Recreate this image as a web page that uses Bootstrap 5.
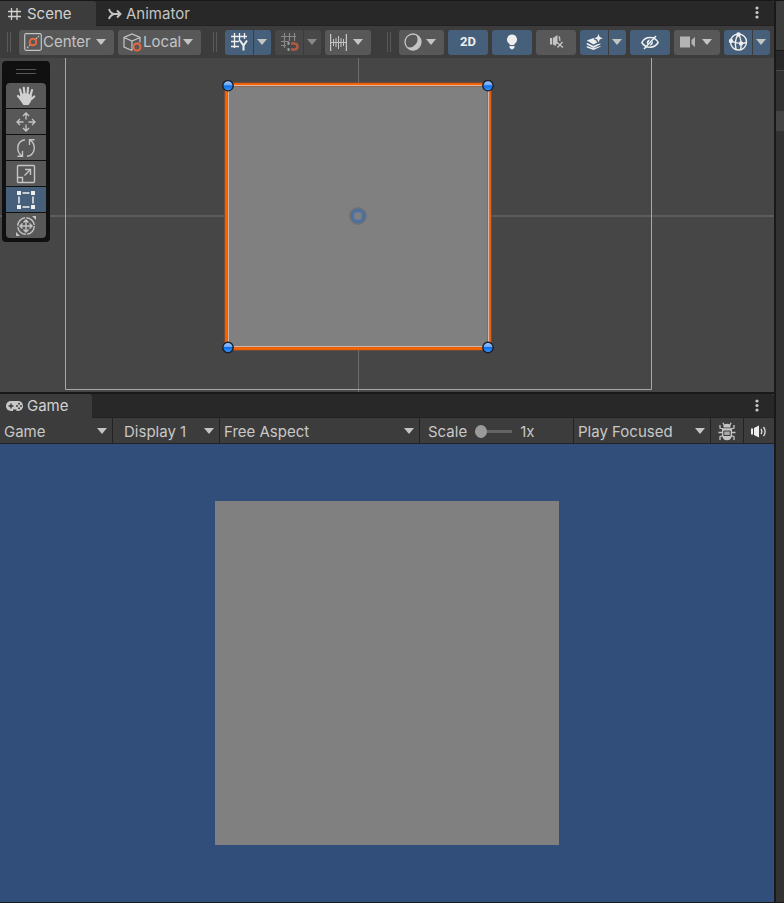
<!DOCTYPE html>
<html lang="en">
<head>
<meta charset="utf-8">
<meta name="viewport" content="width=device-width, initial-scale=1">
<title>Scene and Game views</title>
<link rel="stylesheet" href="https://cdn.jsdelivr.net/npm/bootstrap@5.3.0/dist/css/bootstrap.min.css">
<style>
  body { background: #191919; color: #c8c8c8; font-family: Inter, "Liberation Sans", sans-serif; font-size: 15px; line-height: 20px; }
  .editor { border-top: 1px solid #191919; border-bottom: 1px solid #191919; }
  .views { min-width: 0; gap: 2px; }
  .scene-view { flex: 391 1 0; background: #3c3c3c; min-height: 0; }
  .game-view { flex: 508 1 0; background: #3c3c3c; min-height: 0; }
  .tab-strip { height: 25px; background: #282828; border-bottom: 1px solid #222; flex: none; border-top-right-radius: 3px; }
  .game-view .tab-strip { height: 24px; }
  .dock-tab { margin-bottom: -1px; padding: 0 0 0 7px; gap: 5px; border: 0; background: transparent; color: #c4c4c4; text-align: left; }
  .dock-tab.active { background: #3c3c3c; color: #d2d2d2; border-top-right-radius: 3px; }
  .tab-scene { width: 96px; }
  .tab-animator { width: 110px; padding-left: 12px; gap: 4px; }
  .tab-game { width: 92px; padding-left: 6px; gap: 4px; }
  .kebab { width: 34px; border: 0; background: transparent; color: #c8c8c8; padding: 0 0 2px; }
  .scene-tools { height: 32px; padding: 0 4px 0 7px; gap: 8px; flex: none; }
  .tool-set { gap: 4px; }
  .grip { width: 4px; height: 20px; border: solid #595959; border-width: 0 1px; flex: none; }
  .tool-set + .grip { margin-left: 4px; }
  .tool { height: 25px; border: 0; border-radius: 3px; background: #585858; color: #c4c4c4; padding: 0; display: flex; align-items: center; justify-content: center; }
  .tool.on { background: #46607c; color: #eee; }
  .tool.off { background: #484848; color: #888; }
  .tool.on .arrow { color: #c4c4c4; }
  .tool.menu-tool { justify-content: flex-start; padding: 0 8px 0 5px; gap: 1px; }
  .menu-tool .arrow { margin-left: auto; }
  .w-toggle { width: 40px; }
  .w-menu { width: 46px; }
  .w-draw { width: 45px; }
  .w-main { width: 28px; }
  .w-drop { width: 17px; }
  .tool.w-drop { padding-right: 1px; }
  .w-center { width: 95px; }
  .w-local { width: 83px; }
  .tool-text-2d { font-family: Roboto, "Liberation Sans", sans-serif; font-size: 13px; font-weight: 700; }
  .split { gap: 1px; }
  .split .tool:first-child { border-radius: 3px 0 0 3px; }
  .split .tool:last-child { border-radius: 0 3px 3px 0; }
  .canvas-area { background: #464646; min-height: 0; }
  .canvas-area > svg { display: block; position: absolute; inset: 0; width: 100%; height: 100%; }
  .palette { position: absolute; left: 2px; top: 3px; width: 48px; padding: 0 4px 4px; background: #101010; border-radius: 4px; gap: 1px; }
  .palette-grip { height: 21px; }
  .palette-grip span { width: 20px; height: 5px; border: solid #555; border-width: 1px 0; }
  .palette .tool { width: 40px; border-radius: 0; }
  .palette .tool:nth-child(2) { border-radius: 4px 4px 0 0; }
  .palette .tool:last-child { border-radius: 0 0 4px 4px; }
  .game-tools { height: 26px; border-bottom: 1px solid #222; flex: none; }
  .game-tools > * { flex: none; border: 0; border-right: 1px solid #222; color: #c8c8c8; background-color: #3c3c3c; height: 25px; border-radius: 0; }
  .game-tools > :last-child { border-right: 0; }
  .pick { appearance: none; padding: 2px 0 0 4px; background: #3c3c3c url("data:image/svg+xml,%3Csvg xmlns='http://www.w3.org/2000/svg' width='10' height='6'%3E%3Cpath d='M0 0h10L5 6z' fill='%23c4c4c4'/%3E%3C/svg%3E") no-repeat right 5px top 10px; }
  .pick-view { width: 113px; }
  .pick-display { width: 107px; padding-left: 11px; }
  .pick-aspect { flex: 1 1 0; min-width: 0; }
  .pick-focus { width: 137px; }
  .zoom-box { width: 154px; padding: 2px 0 0 8px; gap: 8px; }
  .zoom-box input { appearance: none; width: 37px; height: 13px; background: linear-gradient(#646464, #646464) center / 100% 3px no-repeat; margin: 0; }
  .zoom-box input::-webkit-slider-thumb { appearance: none; width: 12px; height: 13px; border-radius: 50%; background: #9a9a9a; }
  .zoom-box input::-moz-range-thumb { width: 12px; height: 13px; border: 0; border-radius: 50%; background: #9a9a9a; }
  .game-icon { width: 33px; padding: 0; }
  .game-icon:last-child { width: 30px; }
  .viewport { background: #314d79; min-height: 0; }
  .sprite { height: 75%; aspect-ratio: 1; background: #808080; }
  .side-dock { width: 8px; margin-left: 2px; flex: none; background: #323232; }
  .side-head { height: 49px; background: #3c3c3c; border-top-left-radius: 3px; }
  .side-tabs { height: 21px; background: #282828; border-top: 1px solid #191919; border-bottom: 1px solid #484848; }
  .side-gap { height: 40px; }
  .side-row { height: 20px; background: #444; }
  svg { flex: none; }
</style>
<script src="https://cdn.jsdelivr.net/npm/bootstrap@5.3.0/dist/js/bootstrap.bundle.min.js"></script>
</head>
<body>
<svg class="d-none" aria-hidden="true">
  <symbol id="arrow" viewBox="0 0 10 6"><path d="M0 0h10L5 6z" fill="currentColor"/></symbol>
  <symbol id="dots" viewBox="0 0 4 13"><g fill="currentColor"><circle cx="2" cy="2" r="1.6"/><circle cx="2" cy="6.5" r="1.6"/><circle cx="2" cy="11" r="1.6"/></g></symbol>
</svg>
<div class="editor d-flex vh-100 overflow-hidden">
  <main class="views d-flex flex-column flex-grow-1">
    <section class="scene-view d-flex flex-column" aria-label="Scene view">
      <div class="tab-strip d-flex">
        <button class="dock-tab tab-scene active d-flex align-items-center" type="button">
          <svg width="15" height="14" viewBox="0 0 15 14" fill="none" stroke="currentColor" stroke-width="1.3"><path d="M4.500 1v12M10 1v12M1 4.500h13M1 9.500h13"/></svg>Scene
        </button>
        <button class="dock-tab tab-animator d-flex align-items-center" type="button">
          <svg width="14" height="12" viewBox="0 0 14 12" fill="none" stroke="currentColor" stroke-width="1.9"><path d="M1 1c1 3 3 5 6 5h5M1 11c.5-2 2-4 5-5M9 2.500 12.500 6 9 9.500"/></svg>Animator
        </button>
        <button class="kebab ms-auto" type="button" aria-label="Scene options"><svg width="4" height="13"><use href="#dots"/></svg></button>
      </div>
      <div class="scene-tools d-flex align-items-center" role="toolbar" aria-label="Scene tools">
        <span class="grip"></span>
        <div class="tool-set d-flex">
          <button class="tool menu-tool w-center" type="button">
            <svg width="18" height="18" viewBox="0 0 18 18" fill="none" stroke="currentColor" stroke-width="1.2"><rect x=".7" y=".7" width="16.600" height="16.600" rx="1.500"/><path d="M3 15 6.200 11.800M11.800 6.200 15 3" stroke-dasharray="2 1"/><circle cx="9" cy="9" r="3.300" stroke="#e8693f" stroke-width="1.9"/></svg><span>Center</span><svg class="arrow" width="10" height="6"><use href="#arrow"/></svg>
          </button>
          <button class="tool menu-tool w-local" type="button">
            <svg width="19" height="19" viewBox="0 0 19 19" fill="none" stroke="currentColor" stroke-width="1.2"><path d="M9 17.500 1 14V4.500L9 1l8 3.500v5M1 4.500 9 8l8-3.500M9 8v9.500"/><circle cx="14" cy="14" r="3.500" fill="#585858" stroke="#e8693f" stroke-width="1.9"/></svg><span>Local</span><svg class="arrow" width="10" height="6"><use href="#arrow"/></svg>
          </button>
        </div>
        <span class="grip"></span>
        <div class="tool-set d-flex">
          <div class="split d-flex">
            <button class="tool on w-main" type="button" aria-label="Grid axis">
              <svg width="18" height="18" viewBox="0 0 18 18" fill="none" stroke="currentColor" stroke-width="1.3"><path d="M4.500 0v15M9.500 0v8M14.500 0v6M1 3.500h16M1 8.500h8M1 13.500h8"/><path d="M10 7.500l3.500 5 3.500-5M13.500 12v5.500" stroke-width="2"/></svg>
            </button>
            <button class="tool on w-drop" type="button" aria-label="Grid options"><svg class="arrow" width="10" height="6"><use href="#arrow"/></svg></button>
          </div>
          <div class="split d-flex">
            <button class="tool off w-main" type="button" aria-label="Grid snapping">
              <svg width="19" height="18" viewBox="0 0 19 18" fill="none" stroke="currentColor" stroke-width="1.2"><path d="M4.500 0v15M9.500 0v8M14.500 0v8M1 3.500h15M1 8.500h8M1 12.500h5"/><path d="M11 10.500h3.500a3 3 0 0 1 0 6H11" stroke="#b05a42" stroke-width="2.6"/><path d="M7.500 10.500h2M7.500 16.500h2" stroke="#aaa" stroke-width="2.6"/></svg>
            </button>
            <button class="tool off w-drop" type="button" aria-label="Snapping options"><svg class="arrow" width="10" height="6"><use href="#arrow"/></svg></button>
          </div>
          <button class="tool menu-tool w-menu" type="button" aria-label="Snap increment">
            <svg width="17" height="17" viewBox="0 0 17 17" fill="none" stroke="currentColor"><path d="M.5 0v17M16.500 0v17" stroke-width="1.5"/><path d="M1 8.500h15M3.500 5v7M6 4v9M8.500 2v13M11 4v9M13.500 5v7"/></svg><svg class="arrow" width="10" height="6"><use href="#arrow"/></svg>
          </button>
        </div>
        <span class="grip ms-auto"></span>
        <div class="tool-set d-flex">
          <button class="tool menu-tool w-draw" type="button" aria-label="Draw mode">
            <svg width="18" height="18" viewBox="0 0 18 18"><circle cx="9" cy="9" r="8" fill="none" stroke="currentColor" stroke-width="1.3"/><path d="M12 1.800a8 8 0 1 1-9.500 12A8 8 0 0 0 12 1.800z" fill="currentColor"/></svg><svg class="arrow" width="10" height="6"><use href="#arrow"/></svg>
          </button>
          <button class="tool on w-toggle tool-text-2d" type="button">2D</button>
          <button class="tool on w-toggle" type="button" aria-label="Lighting">
            <svg width="12" height="16" viewBox="0 0 12 16" fill="currentColor"><path d="M6 .5a5 5 0 0 1 3 9c-.6.5-.8 1-.8 1.500H3.800c0-.5-.2-1-.8-1.500a5 5 0 0 1 3-9zM3.500 12h5v1.500L7 15.200H5L3.500 13.500z"/></svg>
          </button>
          <button class="tool w-toggle" type="button" aria-label="Audio">
            <svg width="15" height="14" viewBox="0 0 15 14" fill="currentColor"><path d="M1 3h2.200v6.500H1zM4 3l4.500-3v8L7 9.500V11L4 9.500z"/><path d="M9.800 1.500q1.500 2 1 4.500M8 7.500l6 5M13.500 7 8.500 12.500" fill="none" stroke="currentColor" stroke-width="1.4"/></svg>
          </button>
          <div class="split d-flex">
            <button class="tool on w-main" type="button" aria-label="Effects">
              <svg width="17" height="16" viewBox="0 0 17 16" fill="currentColor"><path d="M12.500 0l1.200 3 3 1.200-3 1.200-1.200 3-1.200-3-3-1.200 3-1.200zM.8 6.500 7.500 4q.5 2 2.500 2.500.8.800 1.200 2L7.500 10.500zM.8 8.800 7.500 12l3.700-1.800 3.300-.8v.8L7.500 14 .8 10.500zM.8 12l6.700 2.300L14.500 12v.8L7.500 16 .8 13.500z"/></svg>
            </button>
            <button class="tool on w-drop" type="button" aria-label="Effects options"><svg class="arrow" width="10" height="6"><use href="#arrow"/></svg></button>
          </div>
          <button class="tool on w-toggle" type="button" aria-label="Scene visibility">
            <svg width="18" height="15" viewBox="0 0 18 15" fill="none" stroke="currentColor" stroke-width="1.5"><path d="M.8 7.500C4.500.8 13.500.8 17.200 7.500 13.500 13.700 4.500 13.700.8 7.500zM3 14 15 1"/><path d="M9 4.500a3 3 0 0 0-2.500 5zM11.500 6a3 3 0 0 1-3 4.500z" fill="currentColor" stroke="none"/></svg>
          </button>
          <button class="tool menu-tool w-menu" type="button" aria-label="Camera settings">
            <svg width="17" height="12" viewBox="0 0 17 12" fill="#b4b4b4"><path d="M1 .5h10v11H1zM12.500 4 16 1v10l-3.500-3z"/></svg><svg class="arrow" width="10" height="6"><use href="#arrow"/></svg>
          </button>
          <div class="split d-flex">
            <button class="tool on w-main" type="button" aria-label="Gizmos">
              <svg width="20" height="20" viewBox="0 0 20 20" fill="none" stroke="currentColor" stroke-width="1.4"><circle cx="10.500" cy="10" r="8"/><path d="M10.500 2q4 7 2 16M10.500 2Q6 8 8 17.500M2.500 8.500q7 4.500 16 2"/><g fill="currentColor" stroke="none"><circle cx="10.500" cy="2.500" r="2.200"/><circle cx="3" cy="9" r="2.200"/><circle cx="13" cy="11.500" r="2.200"/></g></svg>
            </button>
            <button class="tool on w-drop" type="button" aria-label="Gizmo options"><svg class="arrow" width="10" height="6"><use href="#arrow"/></svg></button>
          </div>
        </div>
      </div>
      <div class="canvas-area flex-grow-1 position-relative overflow-hidden">
        <svg viewBox="0 58 774 334" preserveAspectRatio="xMidYMid slice" role="img" aria-label="Selected square sprite">
          <path d="M0 216h774" stroke="#5c5c5c" stroke-width="2"/>
          <path d="M358.500 58v334" stroke="#6e6e6e"/>
          <path d="M65.500 50v339.500h586V50" fill="none" stroke="#a8a8a8"/>
          <rect x="226.500" y="84.500" width="263" height="264" fill="#808080" stroke="#a0522f" stroke-width="4"/>
          <rect x="226.500" y="84.500" width="263" height="264" fill="none" stroke="#ff6600" stroke-width="2.4"/>
          <rect x="228.500" y="85.500" width="260" height="261" fill="none" stroke="#d0b8a8"/>
          <g fill="url(#knob)" stroke="#18202c" stroke-width="1.4">
            <circle cx="228" cy="85.700" r="5.200"/><circle cx="488" cy="85.700" r="5.200"/><circle cx="228" cy="347.500" r="5.200"/><circle cx="488" cy="347.500" r="5.200"/>
          </g>
          <circle cx="358" cy="216" r="8" fill="none" stroke="#6d7075" stroke-width="1.8"/>
          <circle cx="358" cy="216" r="5.800" fill="none" stroke="#4d6f9f" stroke-width="3"/>
          <circle cx="358" cy="216" r="4" fill="none" stroke="#6b7a90"/>
          <defs><linearGradient id="knob" x2="0" y2="1"><stop stop-color="#a4cbff"/><stop offset=".45" stop-color="#6ba6f5"/><stop offset=".5" stop-color="#0e6fe8"/><stop offset="1" stop-color="#3b98ff"/></linearGradient></defs>
        </svg>
        <div class="palette d-flex flex-column" role="toolbar" aria-label="Transform tools">
          <div class="palette-grip d-flex align-items-center justify-content-center"><span></span></div>
          <button class="tool" type="button" aria-label="Hand">
            <svg width="20" height="20" viewBox="0 0 20 20"><path d="M5.500 9 4 3.500M8.500 8 7.800 1.800M11.500 8l.5-6.200M14.500 9.500l1.500-5.500M5.500 14 2 10M15.500 13l2.700-2.500" stroke="#d0d0d0" stroke-width="2.2" stroke-linecap="round"/><path d="M4.500 8q6-2 11 1l.5 3.500q-1 3.500-3.500 6.500h-5Q5 16 3.500 12.500z" fill="#d0d0d0"/></svg>
          </button>
          <button class="tool" type="button" aria-label="Move">
            <svg width="20" height="20" viewBox="0 0 20 20" fill="none" stroke="currentColor" stroke-width="1.3"><path d="M10 7.500V1M7 4l3-3 3 3M10 12.500V19M7 16l3 3 3-3M7.500 10H1M4 7l-3 3 3 3M12.500 10H19M16 7l3 3-3 3"/></svg>
          </button>
          <button class="tool" type="button" aria-label="Rotate">
            <svg width="20" height="20" viewBox="0 0 20 20" fill="none" stroke="currentColor" stroke-width="1.4"><path d="M9 1.700C.5 3-.5 13.500 6 18M1.500 18.300H6.500V13M11 18.300c8.500-1.300 9.500-11.800 3-16.300M18.500 1.700h-5V7"/></svg>
          </button>
          <button class="tool" type="button" aria-label="Scale">
            <svg width="20" height="20" viewBox="0 0 20 20" fill="none" stroke="currentColor" stroke-width="1.4"><rect x="1.500" y="1.500" width="17" height="17" rx="1"/><path d="M1.500 13.500h5v5M8.500 11.500 14 6M9 5.500h5.500V11"/></svg>
          </button>
          <button class="tool on" type="button" aria-label="Rect">
            <svg width="20" height="20" viewBox="0 0 20 20" fill="none" stroke="currentColor" stroke-width="1.5"><path d="M6.500 3h7M6.500 17h7M3 6.500v7M17 6.500v7"/><g fill="currentColor" stroke="none"><path d="M1 1h4v4H1zM15 1h4v4h-4zM1 15h4v4H1zM15 15h4v4h-4z"/></g></svg>
          </button>
          <button class="tool" type="button" aria-label="Transform">
            <svg width="20" height="20" viewBox="0 0 20 20" fill="none" stroke="currentColor" stroke-width="1.4"><circle cx="10" cy="10" r="8.300" stroke-dasharray="11.7 1.34"/><path d="M10 4v12M4 10h12M7.500 6.500 10 4l2.500 2.500M7.500 13.500 10 16l2.500-2.500M6.500 7.500 4 10l2.500 2.500M13.500 7.500 16 10l-2.500 2.500"/><path d="M16 0h4v4zM0 16v4h4z" fill="currentColor" stroke="none"/></svg>
          </button>
        </div>
      </div>
    </section>
    <section class="game-view d-flex flex-column" aria-label="Game view">
      <div class="tab-strip d-flex">
        <button class="dock-tab tab-game active d-flex align-items-center" type="button">
          <svg width="17" height="10" viewBox="0 0 17 10"><rect width="17" height="10" rx="4.800" fill="#c8c8c8"/><path d="M2.500 5h5M5 2.500v5" stroke="#3c3c3c" stroke-width="1.5"/><path d="M7 8.500h3.500V10H7z" fill="#3c3c3c"/><g fill="#3c3c3c"><circle cx="11" cy="5" r="1"/><circle cx="13" cy="2.800" r="1"/><circle cx="15" cy="5" r="1"/><circle cx="13" cy="7.200" r="1"/></g></svg>Game
        </button>
        <button class="kebab ms-auto" type="button" aria-label="Game options"><svg width="4" height="13"><use href="#dots"/></svg></button>
      </div>
      <div class="game-tools d-flex" role="toolbar" aria-label="Game tools">
        <select class="pick pick-view" aria-label="View"><option>Game</option></select>
        <select class="pick pick-display" aria-label="Display"><option>Display 1</option></select>
        <select class="pick pick-aspect" aria-label="Aspect"><option>Free Aspect</option></select>
        <div class="zoom-box d-flex align-items-center"><label for="scale">Scale</label><input id="scale" type="range" min="1" max="5" step="0.1" value="1"><output for="scale">1x</output></div>
        <select class="pick pick-focus" aria-label="Play mode"><option>Play Focused</option></select>
        <button class="game-icon" type="button" aria-label="Frame debugger">
          <svg width="18" height="19" viewBox="0 0 18 19"><path d="M6 4.500Q6 2.500 9 2.500t3 2M6 3 5 .8M12 3l1-2.200M5 7 2 6V3M13 7l3-1V3M5 10.500H.5M13 10.500h4.500M5 13.500l-3 1.200V18M13 13.500l3 1.200V18" fill="none" stroke="#c4c4c4" stroke-width="1.3"/><path d="M5.500 5.500q0-3 3.500-3t3.500 3zM4 6.200h10v7q-.5 5-5 5t-5-5z" fill="#c4c4c4"/><path d="M5.800 9h6.400v4.500H5.800z" fill="#aaa" stroke="#3c3c3c"/></svg>
        </button>
        <button class="game-icon" type="button" aria-label="Mute audio">
          <svg width="18" height="13" viewBox="0 0 18 13" fill="#eee"><path d="M1 3.500h2v6H1zM4 3l5-2.500v12L4 10z"/><path d="M11 4q1.600 2.500 0 5M13.500 2q3.200 4.500 0 9" fill="none" stroke="#d8d8d8" stroke-width="1.4"/></svg>
        </button>
      </div>
      <div class="viewport flex-grow-1 d-flex align-items-center justify-content-center"><div class="sprite"></div></div>
    </section>
  </main>
  <aside class="side-dock" aria-label="Docked panel"><div class="side-head"></div><div class="side-tabs"></div><div class="side-gap"></div><div class="side-row"></div></aside>
</div>
</body>
</html>
